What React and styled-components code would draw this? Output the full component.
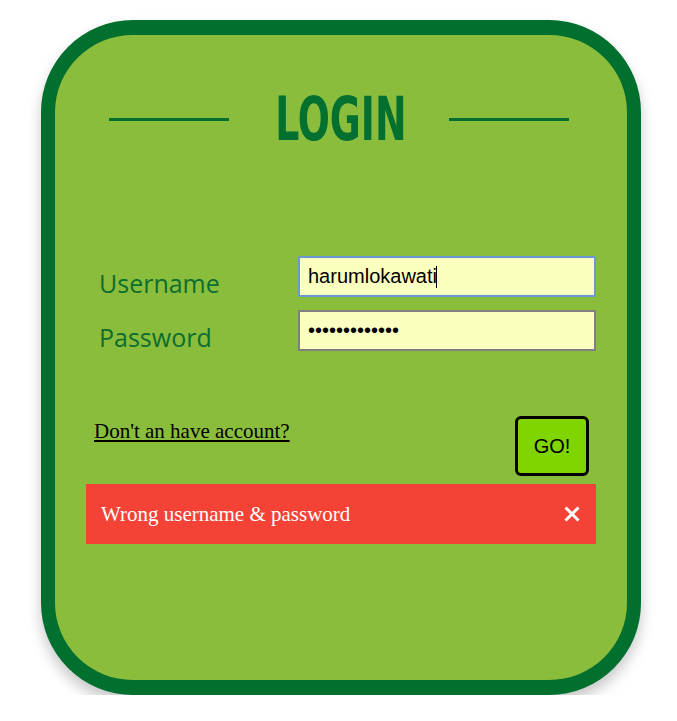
import styled, { createGlobalStyle } from "styled-components";
import { useState } from "react";

const GlobalStyle = createGlobalStyle`
  body {
    margin: 0;
    background: #ffffff;
    font-family: "Liberation Serif", "Times New Roman", serif;
  }
`;

const CloseIcon = () => (
  <svg width="16" height="16" viewBox="0 0 16 16">
    <path d="M1.5 1.5 L14.5 14.5 M14.5 1.5 L1.5 14.5" stroke="#fff" strokeWidth="3" />
  </svg>
);

const App = () => {
  const [username, setUsername] = useState("harumlokawati");
  const [password, setPassword] = useState("harumlokawati");
  const [showError, setShowError] = useState(true);

  return (
    <Page>
      <GlobalStyle />
      <Card>
        <TitleRow>
          <Line />
          <Title>
            <span>LOGIN</span>
          </Title>
          <Line />
        </TitleRow>

        <Form onSubmit={(e) => e.preventDefault()}>
          <Label htmlFor="username">Username</Label>
          <Field>
            <Input
              id="username"
              type="text"
              value={username}
              $focused
              onChange={(e) => setUsername(e.target.value)}
            />
            <Caret />
          </Field>
          <Label htmlFor="password">Password</Label>
          <Field>
            <Input
              id="password"
              type="password"
              value={password}
              onChange={(e) => setPassword(e.target.value)}
            />
          </Field>
        </Form>

        <ActionRow>
          <SignupLink href="#">Don't an have account?</SignupLink>
          <GoButton type="button">GO!</GoButton>
        </ActionRow>

        {showError && (
          <Alert>
            <span>Wrong username &amp; password</span>
            <CloseButton type="button" onClick={() => setShowError(false)}>
              <CloseIcon />
            </CloseButton>
          </Alert>
        )}
      </Card>
    </Page>
  );
};

const Page = styled.div`
  padding: 20px 0 0 41px;
`;

const Card = styled.div`
  box-sizing: border-box;
  width: 600px;
  height: 675px;
  background: #8bbd3c;
  border: 14px solid #016f2d;
  border-top-width: 15px;
  border-bottom-width: 15px;
  border-radius: 92px;
  box-shadow: 0 8px 14px rgba(0, 0, 0, 0.22);
  padding: 55px 31px 0;
`;

const TitleRow = styled.div`
  display: flex;
  justify-content: center;
  align-items: center;
  height: 59px;
  padding-right: 4px;
`;

const Line = styled.div`
  width: 120px;
  height: 3px;
  background: #016f2d;
`;

const Title = styled.h1`
  margin: 0 44px 0 48px;
  width: 128px;
  display: flex;
  justify-content: center;
  span {
    display: inline-block;
    font-family: "DejaVu Sans Condensed", "DejaVu Sans", sans-serif;
    font-stretch: condensed;
    font-weight: 700;
    font-size: 60px;
    line-height: 59px;
    color: #037030;
    transform: scaleX(0.7);
  }
`;

const Form = styled.form`
  display: grid;
  grid-template-columns: 212px 298px;
  row-gap: 13px;
  margin-top: 107px;
`;

const Label = styled.label`
  padding: 15px 0 0 13px;
  font-family: "Open Sans", "Noto Sans", sans-serif;
  font-size: 25px;
  line-height: 25px;
  color: #0b6e2e;
`;

const Field = styled.div`
  position: relative;
  height: 41px;
`;

const Input = styled.input`
  box-sizing: border-box;
  width: 100%;
  height: 41px;
  padding: 0 8px;
  border: 2px solid ${(p) => (p.$focused ? "#6c98d6" : "#808080")};
  border-radius: ${(p) => (p.$focused ? "2px" : "0")};
  background: #fbffbf;
  font-family: "Liberation Sans", Arial, sans-serif;
  font-size: 20px;
  color: #000;
  outline: none;
`;

const Caret = styled.span`
  position: absolute;
  left: 138px;
  top: 10px;
  width: 1px;
  height: 22px;
  background: #000;
`;

const ActionRow = styled.div`
  display: flex;
  justify-content: space-between;
  align-items: flex-start;
  margin-top: 65px;
  padding-right: 7px;
`;

const SignupLink = styled.a`
  margin: 3px 0 0 8px;
  font-family: "Liberation Serif", "Times New Roman", serif;
  font-size: 21px;
  color: #000;
  text-decoration: underline;
`;

const GoButton = styled.button`
  box-sizing: border-box;
  width: 74px;
  height: 60px;
  background: #80d400;
  border: 3px solid #000;
  border-radius: 6px;
  font-family: "Liberation Sans", Arial, sans-serif;
  font-size: 20px;
  color: #000;
  cursor: pointer;
`;

const Alert = styled.div`
  display: flex;
  justify-content: space-between;
  align-items: center;
  height: 60px;
  margin-top: 8px;
  padding: 0 16px 0 15px;
  background: #f44336;
  color: #fff;
  font-family: "Liberation Serif", "Times New Roman", serif;
  font-size: 21px;
`;

const CloseButton = styled.button`
  display: flex;
  padding: 0;
  border: none;
  background: transparent;
  cursor: pointer;
`;

export default App;
